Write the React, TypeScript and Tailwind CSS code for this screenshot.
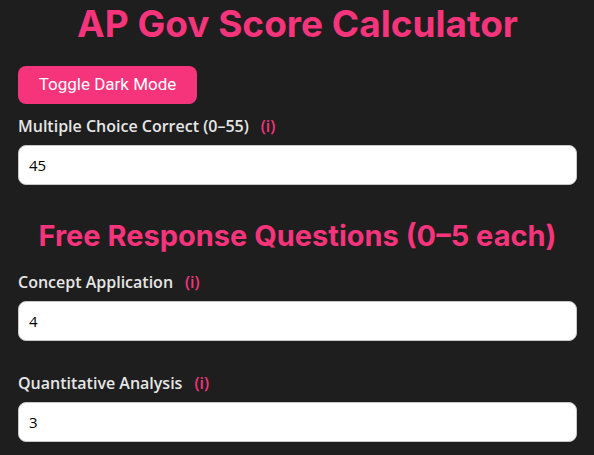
import React, { useState } from 'react';

const PINK = 'text-[#f5347b]';

function Field({ label, value, onChange }: { label: string; value: string; onChange: (v: string) => void }) {
  return (
    <div className="flex flex-col">
      <label className="text-[16px] font-semibold text-[#e6e6e6] leading-[22px] flex items-center">
        {label}
        <span className={`${PINK} ml-3 font-semibold`}>(i)</span>
      </label>
      <input
        type="number"
        value={value}
        onChange={(e) => onChange(e.target.value)}
        className="mt-[8px] h-10 w-full rounded-lg border border-[#c8c8c8] bg-white px-[10px] text-[15px] text-black outline-none"
        style={{ fontFamily: '"Open Sans", sans-serif' }}
      />
    </div>
  );
}

export default function App() {
  const [mc, setMc] = useState('45');
  const [concept, setConcept] = useState('4');
  const [quant, setQuant] = useState('3');

  return (
    <div
      className="min-h-screen bg-[#1e1e1e] pl-[18px] pr-[17px] pb-8"
      style={{ fontFamily: '"Open Sans", "Noto Sans", sans-serif' }}
    >
      {/* Header */}
      <h1
        className={`${PINK} text-center text-[37px] font-bold leading-[46px] pt-[1px]`}
        style={{ fontFamily: 'Inter, sans-serif' }}
      >
        AP Gov Score Calculator
      </h1>

      <button
        className="mt-[19px] h-[38px] w-[179px] rounded-lg bg-[#f5347b] text-[17px] text-white"
        style={{ fontFamily: 'Roboto, sans-serif' }}
      >
        Toggle Dark Mode
      </button>

      <div className="mt-[11px]">
        <Field label="Multiple Choice Correct (0–55)" value={mc} onChange={setMc} />
      </div>

      <h2
        className={`${PINK} mt-[33px] text-center text-[29px] font-bold leading-9`}
        style={{ fontFamily: 'Inter, sans-serif' }}
      >
        Free Response Questions (0–5 each)
      </h2>

      <div className="mt-[17px] flex flex-col gap-[31px]">
        <Field label="Concept Application" value={concept} onChange={setConcept} />
        <Field label="Quantitative Analysis" value={quant} onChange={setQuant} />
      </div>
    </div>
  );
}
